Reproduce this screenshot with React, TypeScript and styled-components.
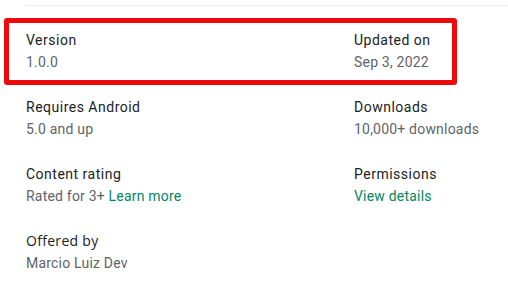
import React from 'react';
import styled, { createGlobalStyle } from 'styled-components';

interface InfoItem {
  label: string;
  value: string;
  link?: string;
  labelFont?: 'sans' | 'geo';
}

const items: InfoItem[] = [
  { label: 'Version', value: '1.0.0' },
  { label: 'Updated on', value: 'Sep 3, 2022' },
  { label: 'Requires Android', value: '5.0 and up' },
  { label: 'Downloads', value: '10,000+ downloads' },
  { label: 'Content rating', value: 'Rated for 3+', link: 'Learn more' },
  { label: 'Permissions', value: '', link: 'View details' },
  { label: 'Offered by', value: 'Marcio Luiz Dev', labelFont: 'geo' },
];

function App(): JSX.Element {
  return (
    <>
      <GlobalStyle />
      <Page>
        <Divider />
        <InfoGrid>
          {items.map((item) => (
            <Item key={item.label}>
              <Label $font={item.labelFont}>{item.label}</Label>
              <Value>
                {item.value}
                {item.value && item.link ? ' ' : ''}
                {item.link && <Link>{item.link}</Link>}
              </Value>
            </Item>
          ))}
        </InfoGrid>
        {/* annotation frame drawn over the first row */}
        <Highlight />
      </Page>
    </>
  );
}

const GlobalStyle = createGlobalStyle`
  html, body {
    margin: 0;
    padding: 0;
    background: #ffffff;
  }
  body {
    font-family: Roboto, "Liberation Sans", Arial, sans-serif;
    -webkit-font-smoothing: antialiased;
  }
`;

const Page = styled.div`
  position: relative;
  width: 508px;
  height: 290px;
  overflow: hidden;
  background: #ffffff;
`;

const Divider = styled.div`
  margin: 5px 0 0 26px;
  height: 1px;
  background: #e8eaed;
`;

const InfoGrid = styled.div`
  display: grid;
  grid-template-columns: 328px 1fr;
  row-gap: 25px;
  padding: 24px 0 0 26px;
`;

const Item = styled.div`
  display: flex;
  flex-direction: column;
  gap: 2px;
`;

const Label = styled.div<{ $font?: 'sans' | 'geo' }>`
  font-family: ${({ $font }) =>
    $font === 'geo' ? '"Open Sans", Roboto, sans-serif' : 'Roboto, "Liberation Sans", sans-serif'};
  font-size: 14px;
  line-height: 20px;
  color: #202124;
  letter-spacing: ${({ $font }) => ($font === 'geo' ? '0.3px' : '0.5px')};
`;

const Value = styled.div`
  font-size: 14px;
  line-height: 20px;
  color: #5f6368;
  letter-spacing: 0.2px;
`;

const Link = styled.span`
  color: #01875f;
`;

const Highlight = styled.div`
  position: absolute;
  left: 4px;
  top: 18px;
  width: 453px;
  height: 67px;
  box-sizing: border-box;
  border: 5px solid #ee0a0a;
  border-radius: 3px;
  pointer-events: none;
`;

export default App;
